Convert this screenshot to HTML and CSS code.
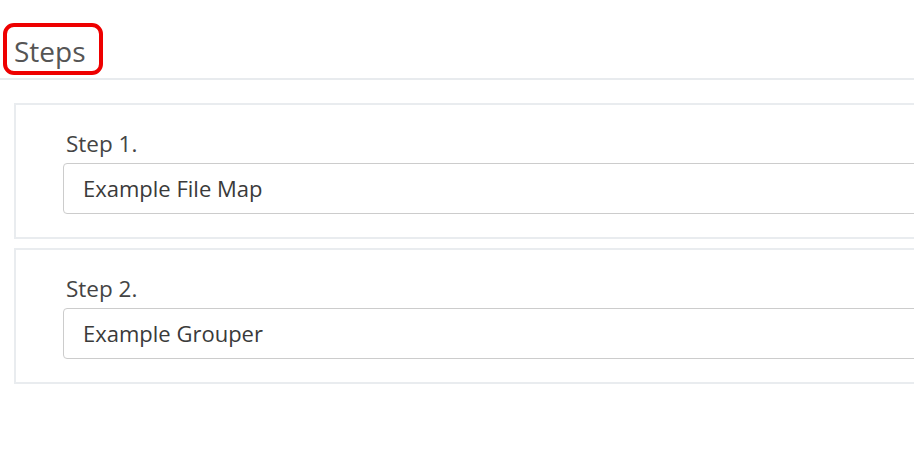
FILE: index.html
```html
<!DOCTYPE html>
<html>
<head>
<meta charset="utf-8">
<link rel="stylesheet" href="styles.css">
</head>
<body>
<div class="page">
  <div class="section-header">
    <h2 class="title">Steps<span class="highlight"></span></h2>
  </div>
  <div class="steps">
    <div class="step-card">
      <label class="step-label">Step 1.</label>
      <div class="step-input">Example File Map</div>
    </div>
    <div class="step-card">
      <label class="step-label">Step 2.</label>
      <div class="step-input">Example Grouper</div>
    </div>
  </div>
</div>
</body>
</html>
```
FILE: styles.css
```css
html, body {
  margin: 0;
  padding: 0;
  background: #fff;
  overflow: hidden;
}
body {
  font-family: "Open Sans", "Liberation Sans", sans-serif;
  color: #333;
}
.page {
  width: 914px;
  height: 473px;
  overflow: hidden;
}
.section-header {
  padding: 32px 0 0 14px;
  height: 46px;
  border-bottom: 2px solid #e8ebee;
  box-sizing: content-box;
}
.title {
  position: relative;
  display: inline-block;
  margin: 0;
  font-size: 28px;
  line-height: 38px;
  font-weight: 400;
  color: #555;
}
.highlight {
  position: absolute;
  left: -11px;
  top: -9px;
  width: 92px;
  height: 44px;
  border: 4px solid #ee0000;
  border-radius: 11px;
}
.steps {
  margin: 23px 0 0 14px;
  width: 1000px;
  display: flex;
  flex-direction: column;
  gap: 9px;
}
.step-card {
  border: 2px solid #e9ecef;
  padding: 24px 0 23px 47px;
  display: flex;
  flex-direction: column;
}
.step-label {
  font-size: 22.5px;
  line-height: 30px;
  color: #444;
  padding-left: 3px;
}
.step-input {
  margin-top: 4px;
  height: 49px;
  border: 1px solid #ccc;
  border-radius: 4px;
  padding-left: 19px;
  font-size: 22px;
  line-height: 49px;
  color: #3a3a3a;
}
```
